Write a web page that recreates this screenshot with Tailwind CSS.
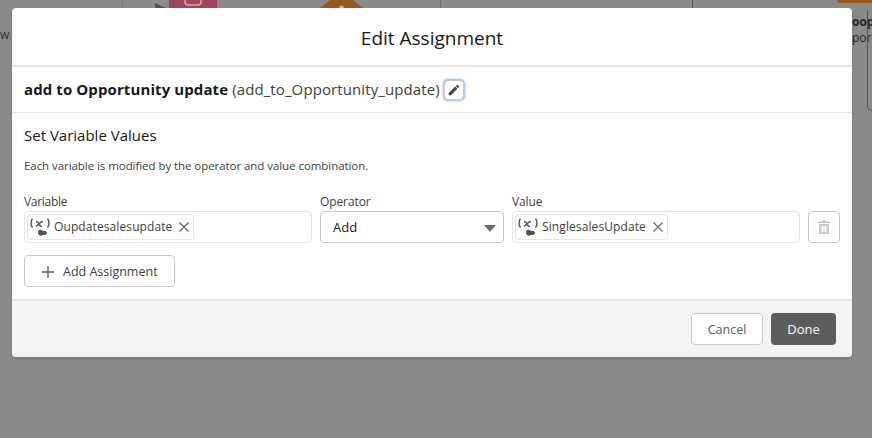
<!DOCTYPE html>
<html lang="en">
<head>
    <meta charset="UTF-8" />
    <title>Edit Assignment</title>
    <script src="https://cdn.jsdelivr.net/npm/@tailwindcss/browser@4"></script>
</head>
<body class="relative h-[438px] w-[872px] overflow-hidden bg-[#8a8a8a] font-['Open_Sans',sans-serif] text-[#181818]">

    <!-- flow canvas behind the overlay -->
    <div class="absolute left-0 top-[29px] text-[12px] leading-none text-[#333]">w</div>
    <div class="absolute left-[122px] top-0 h-[8px] w-px bg-[#7d7d7d]"></div>
    <svg class="absolute left-[150px] top-0 h-[8px] w-[220px]" viewBox="0 0 220 8">
        <path d="M5 3l11 5H5z" fill="#555"/>
        <path d="M19 0h48v8H19z" fill="#a2435e"/>
        <path d="M35 0v2a3 3 0 0 0 3 3h10a3 3 0 0 0 3-3V0" fill="none" stroke="#d9a3b4" stroke-width="1.500"/>
        <path d="M170 8l10-8h23l10 8z" fill="#94591f"/>
        <path d="M189 8a2.500 2.500 0 0 1 5 0z" fill="#c9b29a"/>
    </svg>
    <svg class="absolute left-[430px] top-0 h-[8px] w-[20px]" viewBox="0 0 20 8"><path d="M11 0c0 3-.5 6-1 8" fill="none" stroke="#666"/></svg>
    <div class="absolute left-[692px] top-0 h-[8px] w-px bg-[#555]"></div>
    <div class="absolute left-[837px] top-0 h-[3px] w-[35px] rounded-bl-[2px] bg-[#94591f]"></div>
    <div class="absolute left-[852px] top-[13px] text-[12px] font-bold leading-[18px] text-[#222]">oop</div>
    <div class="absolute left-[852px] top-[30px] text-[12px] leading-[16px] text-[#222]">por</div>
    <div class="absolute left-[867px] top-[10px] h-[101px] w-[5px] rounded-bl-[8px] border-b border-l border-[#555]"></div>

    <!-- modal -->
    <div class="absolute left-[12px] top-[8px] flex h-[349px] w-[840px] flex-col overflow-hidden rounded-[4px] bg-white shadow-[0_2px_3px_rgba(0,0,0,0.16)]">
        <header class="flex h-[59px] shrink-0 items-center justify-center border-b-2 border-[#e5e5e5] pt-[3px]">
            <h1 class="text-[19px] font-normal leading-[24px]">Edit Assignment</h1>
        </header>

        <div class="flex h-[46px] shrink-0 items-center gap-[4px] border-b border-[#e5e5e5] pl-[12px] text-[15px]">
            <p class="tracking-[0.1px]"><span class="font-bold">add to Opportunity update</span> <span class="text-[#3e3e3c]">(add_to_Opportunity_update)</span></p>
            <button class="flex h-[20px] w-[20px] items-center justify-center rounded-[4px] border border-[#c9c9c9] bg-white shadow-[0_0_3px_#0176d3]">
                <svg viewBox="0 0 24 24" class="h-[14px] w-[14px] fill-[#444]"><path d="M3 17.25V21h3.75L17.8 9.94l-3.75-3.75L3 17.25zM20.7 7.04a1 1 0 0 0 0-1.41l-2.33-2.34a1 1 0 0 0-1.41 0l-1.83 1.83 3.75 3.75 1.82-1.83z"/></svg>
            </button>
        </div>

        <main class="flex-1 px-[12px]">
            <h2 class="mt-[12px] text-[15px] font-normal leading-[20px]">Set Variable Values</h2>
            <p class="mt-[13px] text-[11.5px] leading-[16px] tracking-[-0.06px] text-[#3e3e3c]">Each variable is modified by the operator and value combination.</p>

            <div class="mt-[19px] flex gap-[8px]">
                <div class="w-[288px]">
                    <label class="block text-[12px] leading-[18px] tracking-[-0.3px] text-[#3e3e3c]">Variable</label>
                    <div class="flex h-[32px] items-center rounded-[4px] border border-[#e5e5e5] px-[2px]">
                        <span class="flex h-[26px] items-center gap-[3px] rounded-[4px] border border-[#e5e5e5] pl-[1px] pr-[3px] text-[12px] leading-[28px] tracking-[0.1px] text-[#3e3e3c]">
                            <svg viewBox="0 0 22 20" class="h-[20px] w-[22px]" fill="none"><path d="M3.500 1.500C1.500 4 1.500 8 3.500 10.500M18.500 1.500c2 2.500 2 6.500 0 9M7 4.500c2 0 2.500 1 3 2.500s1 2.500 3 2.500M14 4.500c-2.500 0-4.500 3-7 5" stroke="#5f5d5b" stroke-width="1.500"/><path d="M9 15c0-2 2-2.500 3-2 1 0 1.500 1 3 1s3 .5 3 1.500-1 2.500-3 2.500-2.500 1-4 .5S9 17 9 15z" fill="#505050"/></svg>
                            Oupdatesalesupdate
                            <svg viewBox="0 0 12 12" class="ml-[3px] h-[12px] w-[12px]" fill="none"><path d="M1.500 1.500l9 9M10.500 1.500l-9 9" stroke="#706e6b" stroke-width="1.400"/></svg>
                        </span>
                    </div>
                </div>
                <div class="w-[184px]">
                    <label class="block text-[12px] leading-[18px] tracking-[-0.1px] text-[#3e3e3c]">Operator</label>
                    <div class="flex h-[32px] items-center justify-between rounded-[4px] border border-[#c9c9c9] pl-[12px] pr-[7px] pt-px text-[13px]">
                        Add
                        <svg viewBox="0 0 12 8" class="h-[8px] w-[12px] fill-[#706e6b]"><path d="M0 1h12L6 8z"/></svg>
                    </div>
                </div>
                <div class="w-[288px]">
                    <label class="block text-[12px] leading-[18px] tracking-[-0.1px] text-[#3e3e3c]">Value</label>
                    <div class="flex h-[32px] items-center rounded-[4px] border border-[#e5e5e5] px-[2px]">
                        <span class="flex h-[26px] items-center gap-[3px] rounded-[4px] border border-[#e5e5e5] pl-[1px] pr-[3px] text-[12px] leading-[28px] tracking-[0.1px] text-[#3e3e3c]">
                            <svg viewBox="0 0 22 20" class="h-[20px] w-[22px]" fill="none"><path d="M3.500 1.500C1.500 4 1.500 8 3.500 10.500M18.500 1.500c2 2.500 2 6.500 0 9M7 4.500c2 0 2.500 1 3 2.500s1 2.500 3 2.500M14 4.500c-2.500 0-4.500 3-7 5" stroke="#5f5d5b" stroke-width="1.500"/><path d="M9 15c0-2 2-2.500 3-2 1 0 1.500 1 3 1s3 .5 3 1.500-1 2.500-3 2.500-2.500 1-4 .5S9 17 9 15z" fill="#505050"/></svg>
                            SinglesalesUpdate
                            <svg viewBox="0 0 12 12" class="ml-[3px] h-[12px] w-[12px]" fill="none"><path d="M1.500 1.500l9 9M10.500 1.500l-9 9" stroke="#706e6b" stroke-width="1.400"/></svg>
                        </span>
                    </div>
                </div>
                <button class="mt-[18px] flex h-[32px] w-[32px] items-center justify-center rounded-[4px] border border-[#c9c9c9] bg-white">
                    <svg viewBox="0 0 14 14" class="h-[14px] w-[14px] fill-[#c9c9c9]"><path d="M5.500 0h3v1.500H13V3H1V1.500h4.500zM2 4h10v10H2zm2.500 2v6h2V6zm3 0v6h2V6z" fill-rule="evenodd"/></svg>
                </button>
            </div>

            <button class="mt-[12px] flex h-[32px] w-[151px] items-center gap-[9px] rounded-[4px] border border-[#c9c9c9] bg-white pl-[17px] pt-[2px] text-[12.5px] text-[#3e3e3c]">
                <svg viewBox="0 0 12 12" class="h-[12px] w-[12px]" fill="none"><path d="M6 0v12M0 6h12" stroke="#555" stroke-width="1.300"/></svg>
                Add Assignment
            </button>
        </main>

        <footer class="flex h-[58px] shrink-0 items-center justify-end gap-[8px] border-t-2 border-[#e5e5e5] bg-[#f3f3f3] pr-[16px]">
            <button class="h-[32px] w-[72px] rounded-[4px] border border-[#c9c9c9] bg-white pt-[2px] text-[12.5px] text-[#54606d]">Cancel</button>
            <button class="h-[32px] w-[65px] rounded-[4px] bg-[#5c5c5c] pt-px text-[13px] text-white">Done</button>
        </footer>
    </div>

</body>
</html>
